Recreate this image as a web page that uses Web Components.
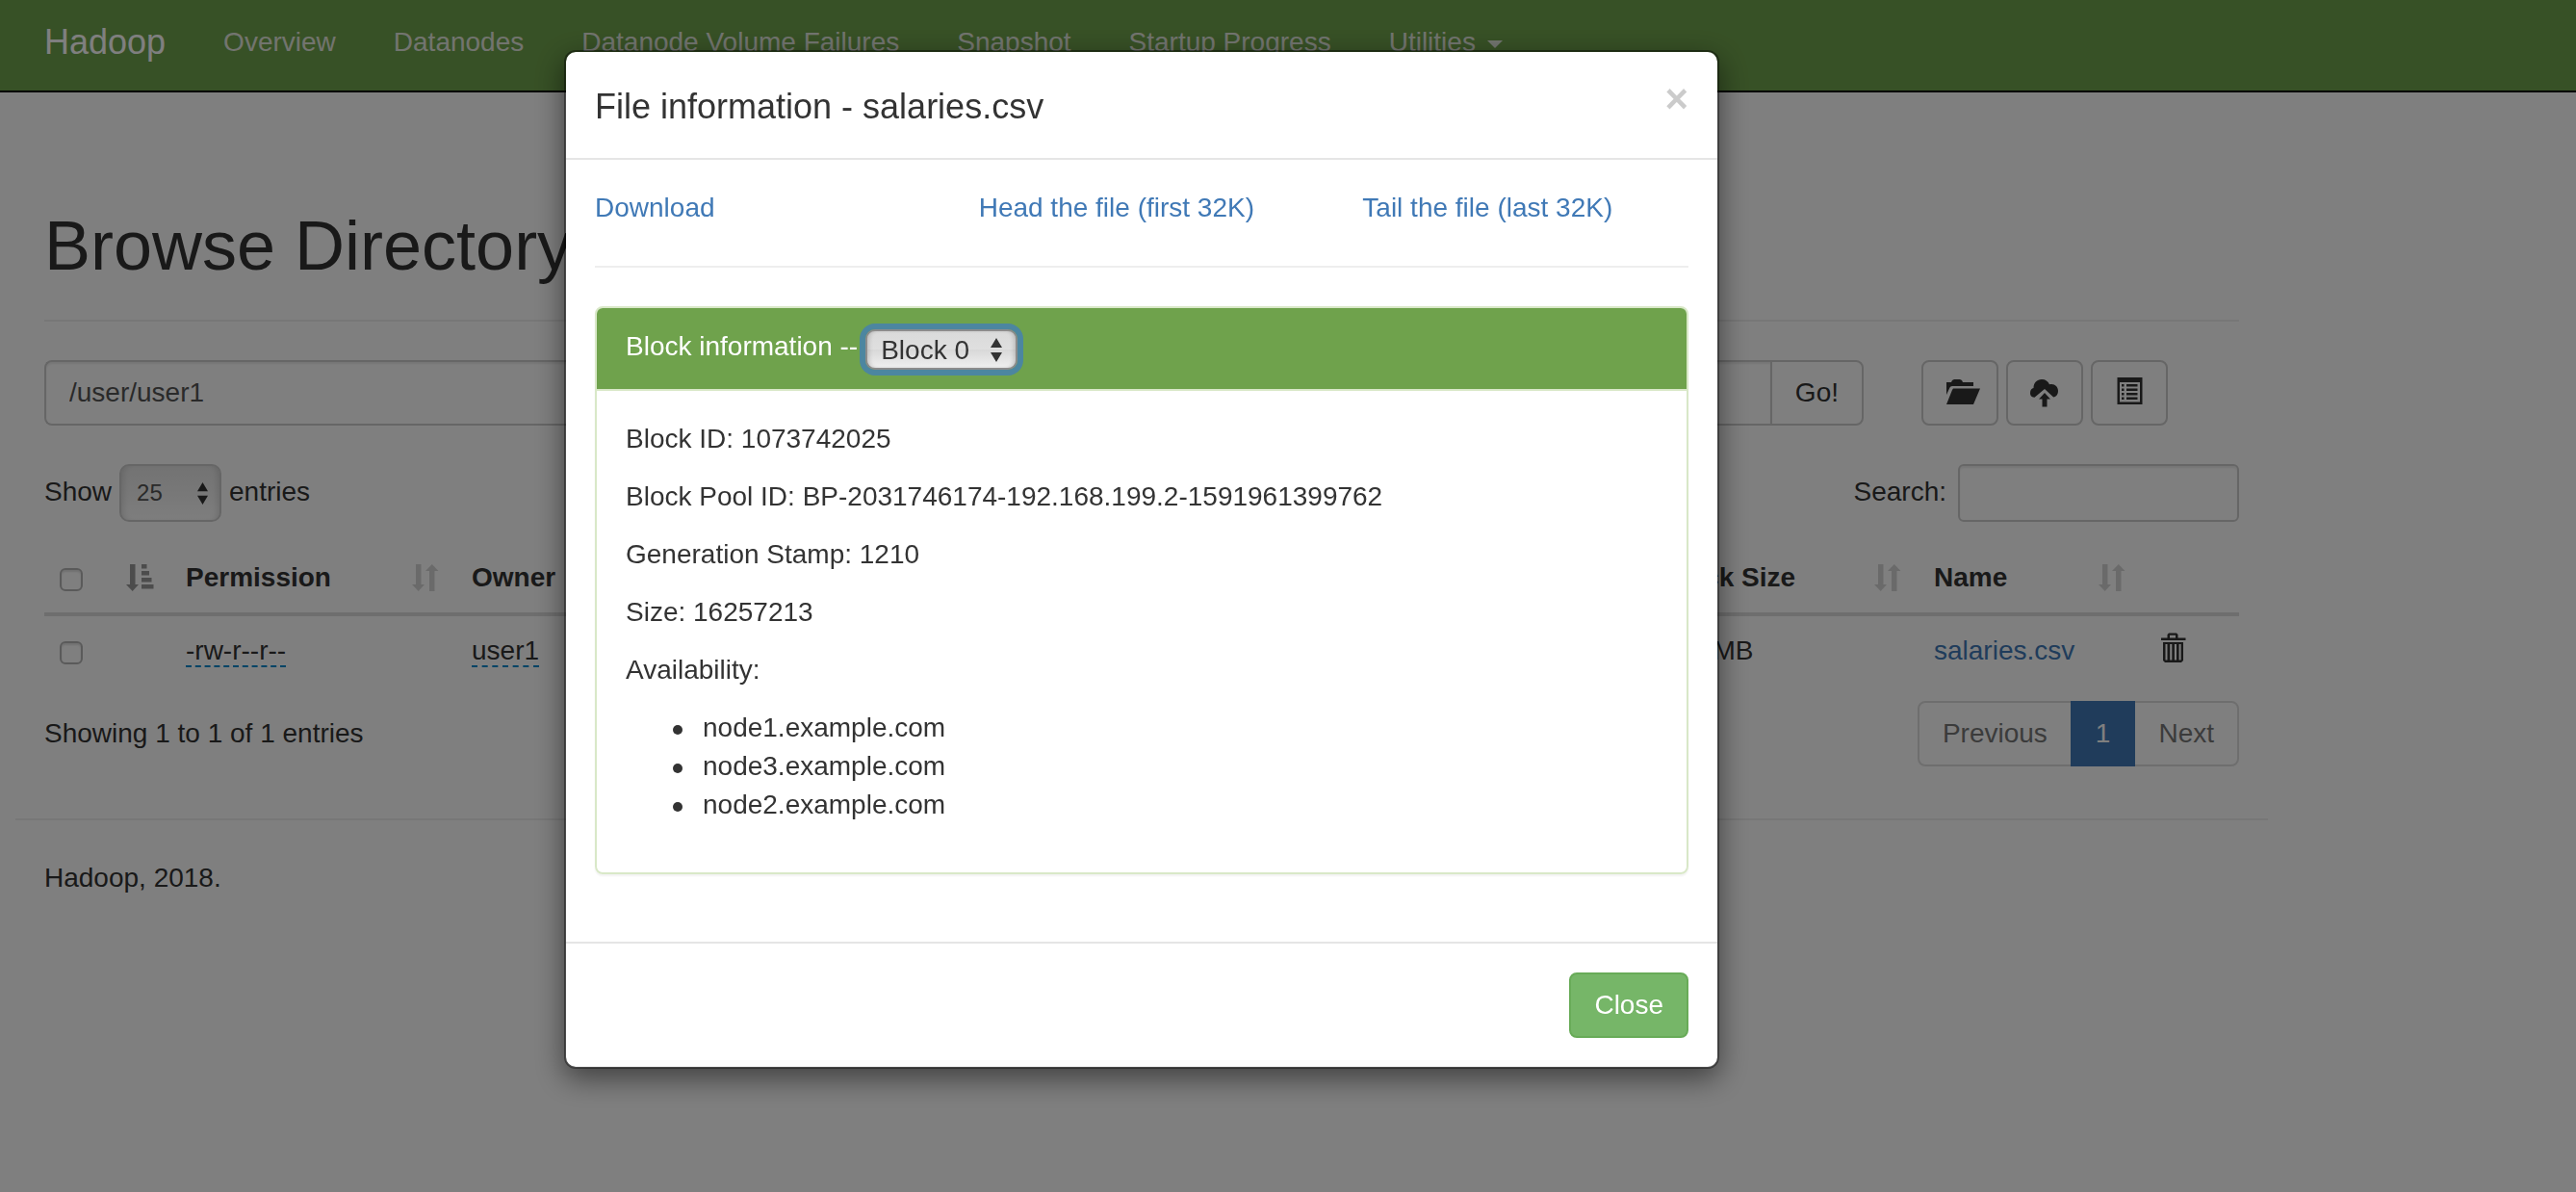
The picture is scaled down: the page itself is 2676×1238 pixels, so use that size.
<!DOCTYPE html>
<html lang="en">
<head>
<meta charset="utf-8">
<title>Browsing HDFS</title>
<style>
  :root {
    --green: #6fa24c;
    --link: #4079b6;
    --text: #333;
    --line: #eee;
    --gutter: 30px;
    --aside: 304px;
  }
  body {
    margin: 0;
    background: #fff;
    color: var(--text);
    font: 28px/40px "Liberation Sans", Arial, sans-serif;
  }
</style>
</head>
<body>
<hdfs-navbar></hdfs-navbar>
<hdfs-container>
  <hdfs-explorer></hdfs-explorer>
  <hdfs-footer slot="footer">Hadoop, 2018.</hdfs-footer>
</hdfs-container>
<hdfs-modal heading="File information - salaries.csv">
  <file-links></file-links>
  <block-panel></block-panel>
</hdfs-modal>

<script>
const define = (name, html, setup) => {
  const template = document.createElement('template');
  template.innerHTML = html;
  customElements.define(name, class extends HTMLElement {
    constructor() {
      super();
      this.attachShadow({ mode: 'open' }).append(template.content.cloneNode(true));
    }
    connectedCallback() { if (setup) setup(this, this.shadowRoot); }
  });
};

// Pair of triangles shown at the right end of a drop-down.
const arrows = `url("data:image/svg+xml,%3Csvg xmlns='http://www.w3.org/2000/svg' width='12' height='25' viewBox='0 0 12 25'%3E%3Cpath fill='%23333' d='M6 0l6 10H0zM0 15h12L6 25z'/%3E%3C/svg%3E")`;

const ICONS = {
  folder: '<path d="M0 16V3h5l1-2 2-1h6l2 1 1 2h11v4H6Q4 7 3.500 8.500zM7 9.500h28L28 26H0L6 11z"/>',
  cloud: '<path d="M3.500 18.800C0 18.500-1 16.500-1 14c0-3 1.500-4.500 3.500-5C2.500 3.500 6 0 11 0c4 0 6.500 2 8 5.200 5-1.200 9 2 9 6.800 0 3.500-2 6-4.800 6.500L14 10z"/><path d="M14 14l6 6.500h-3.500v8h-5v-8H8z"/>',
  list: '<path fill-rule="evenodd" d="M1.500-2h26v28h-26zM4 3v20.500h21V3z"/><path d="M6 5h2.500v2.500H6zm5 0h11.500v2.500H11zM6 9.500h2.500V12H6zm5 0h11.500V12H11zM6 14h2.500v2.500H6zm5 0h11.500v2.500H11zM6 18.500h2.500V21H6zm5 0h11.500V21H11z"/>',
  trash: '<path fill-rule="evenodd" d="M9.500 5.500V2L11 .5h8L20.500 2v3.500H28.500V8H3V5.500zM12 5.500h6V2.800h-6zM5 10h21v19l-2 2H7l-2-2zM7.500 12v16.500h2V12zm4.700 0v16.500h2.100V12zm4.700 0v16.500h2.100V12zm4.700 0v16.500h2V12z"/>',
  both: '<path d="M4 0h5.500v21H13l-6.300 7L0 21h4zM18 28h5.500V7H27.500L20.800 0 14 7h4z"/>',
  asc: '<path d="M4 0h5.500v21H13l-6.300 7L0 21h4zM16 0h5.500v4.500H16zM16 7h8v4.500h-8zM16 14h10.500v4.500H16zM16 21h12.500v4.500H16z"/>'
};
define('ui-icon', `
  <style>
    :host { display: block; flex: none; width: 28px; height: 28px; }
    svg { display: block; width: 28px; height: 28px; overflow: visible; fill: currentColor; }
  </style>
  <svg viewBox="0 0 28 28" aria-hidden="true"></svg>`,
  (el, root) => { root.querySelector('svg').innerHTML = ICONS[el.getAttribute('name')]; });

define('hdfs-navbar', `
  <style>
    :host { display: block; background: var(--green); border-bottom: 2px solid #080808; }
    nav { display: flex; padding-left: 16px; }
    a { padding: 24px 30px 30px; color: #e4e9df; text-decoration: none; }
    .brand { font-size: 36px; color: #fff; }
    .caret { display: inline-block; margin-left: 4px; vertical-align: middle;
      border: 8px solid transparent; border-top-color: currentColor; border-bottom: 0; }
  </style>
  <nav>
    <a class="brand" href="#">Hadoop</a>
    <a href="#overview">Overview</a>
    <a href="#datanodes">Datanodes</a>
    <a href="#failures">Datanode Volume Failures</a>
    <a href="#snapshot">Snapshot</a>
    <a href="#startup">Startup Progress</a>
    <a href="#utilities">Utilities <span class="caret"></span></a>
  </nav>`);

define('hdfs-container', `
  <style>
    :host { display: block; margin-right: var(--aside); }
    div { max-width: 2340px; margin: 0 auto; }
    main { padding: 0 var(--gutter); }
  </style>
  <div><main><slot></slot></main><slot name="footer"></slot></div>`);

define('hdfs-footer', `
  <style>
    :host { display: block; margin-top: 54px; border-top: 2px solid var(--line); padding: 40px var(--gutter) 0; }
  </style>
  <slot></slot>`);

define('hdfs-explorer', `
  <style>
    :host { display: block; padding-top: 120px; }
    * { box-sizing: border-box; }
    header { border-bottom: 2px solid var(--line); padding-bottom: 38px; margin-bottom: 40px; }
    h1 { margin: 0; font-size: 72px; line-height: 78px; font-weight: normal; }
    input, select, button { font: inherit; color: #555; }
    input[type=text], input[type=search] {
      border: 2px solid #ccc; border-radius: 8px; background: #fff; padding: 0 24px;
      box-shadow: inset 0 2px 2px rgba(0,0,0,.075); min-width: 0;
    }
    button { height: 68px; padding: 0 24px; border: 2px solid #ccc; border-radius: 8px; background: #fff; color: #333; }
    .tools { display: grid; grid-template-columns: 5fr 1fr; margin: 0 calc(-1 * var(--gutter)) 40px; }
    .tools > div { padding: 0 var(--gutter); }
    .path { display: flex; }
    .path input { flex: 1; height: 68px; border-radius: 8px 0 0 8px; border-right: 0; }
    .path button { border-radius: 0 8px 8px 0; }
    .actions { display: flex; gap: 8px; }
    .controls { display: flex; justify-content: space-between; margin-bottom: 22px; }
    .controls label { display: flex; align-items: baseline; }
    .length { gap: 8px; }
    .length select {
      appearance: none; width: 106px; height: 60px; padding: 0 16px; font-size: 24px;
      border: 2px solid #ccc; border-radius: 10px;
      background: ${arrows} no-repeat right 12px center / 11px 23px, linear-gradient(#e6e6e6, #f0f0f0 50%, #fcfcfc);
      box-shadow: inset 6px 0 6px -4px rgba(0,0,0,.12), inset -6px 0 6px -4px rgba(0,0,0,.12);
    }
    .search { gap: 12px; }
    .search input { width: 292px; height: 60px; border-radius: 6px; font-size: 24px; }
    table { width: 100%; table-layout: fixed; border-collapse: separate; border-spacing: 0; }
    th, td { padding: 16px; text-align: left; vertical-align: top; white-space: nowrap; }
    th { border-bottom: 4px solid #ddd; padding-right: 18px; }
    th div { display: flex; justify-content: space-between; align-items: center; height: 40px; }
    td { height: 72px; }
    ui-icon[name=both] { opacity: .2; }
    ui-icon[name=asc] { opacity: .5; }
    th ui-icon { margin-left: auto; }
    input[type=checkbox] {
      appearance: none; display: block; width: 24px; height: 24px; margin: 10px 0 6px;
      border: 2px solid #b4b4b4; border-radius: 6px; background: #fff;
      box-shadow: inset 0 2px 2px rgba(0,0,0,.12);
    }
    a { color: var(--link); text-decoration: none; }
    .edit { color: inherit; border-bottom: 2px dashed #08c; }
    .trash { display: block; height: 30px; padding: 0; border: 0; background: none; }
    .after { display: flex; justify-content: space-between; align-items: center; padding-top: 16px; }
    .pages { display: flex; }
    .pages a { display: block; padding: 12px 24px; border: 2px solid #ddd; margin-left: -2px; color: #777; }
    .pages a:first-child { margin-left: 0; border-radius: 8px 0 0 8px; }
    .pages a:last-child { border-radius: 0 8px 8px 0; }
    .pages .on { background: var(--link); border-color: var(--link); color: #fff; position: relative; z-index: 1; }
  </style>
  <header><h1>Browse Directory</h1></header>
  <div class="tools">
    <div class="path"><input type="text" aria-label="Directory" value="/user/user1"><button>Go!</button></div>
    <div class="actions">
      <button aria-label="Create directory"><ui-icon name="folder"></ui-icon></button>
      <button aria-label="Upload files"><ui-icon name="cloud"></ui-icon></button>
      <button aria-label="Cut and paste"><ui-icon name="list"></ui-icon></button>
    </div>
  </div>
  <div class="controls">
    <label class="length">Show <select><option>25</option></select> entries</label>
    <label class="search">Search: <input type="search"></label>
  </div>
  <table>
    <colgroup>
      <col style="width:56px"><col style="width:75px"><col style="width:297px">
      <col style="width:220px"><col style="width:220px"><col style="width:200px"><col>
      <col style="width:280px"><col style="width:284px"><col style="width:233px"><col style="width:100px">
    </colgroup>
    <thead><tr>
      <th><input type="checkbox" aria-label="Select all"></th>
      <th><div><ui-icon name="asc"></ui-icon></div></th>
      <th><div>Permission<ui-icon name="both"></ui-icon></div></th>
      <th><div>Owner<ui-icon name="both"></ui-icon></div></th>
      <th aria-label="Group"><div><ui-icon name="both"></ui-icon></div></th>
      <th aria-label="Size"><div><ui-icon name="both"></ui-icon></div></th>
      <th aria-label="Last Modified"><div><ui-icon name="both"></ui-icon></div></th>
      <th aria-label="Replication"><div><ui-icon name="both"></ui-icon></div></th>
      <th><div>Block Size<ui-icon name="both"></ui-icon></div></th>
      <th><div>Name<ui-icon name="both"></ui-icon></div></th>
      <th></th>
    </tr></thead>
    <tbody><tr>
      <td><input type="checkbox" aria-label="Select salaries.csv"></td>
      <td></td>
      <td><span class="edit">-rw-r--r--</span></td>
      <td><span class="edit">user1</span></td>
      <td></td>
      <td></td>
      <td></td>
      <td></td>
      <td>128 MB</td>
      <td><a href="#file">salaries.csv</a></td>
      <td><button class="trash" aria-label="Delete"><ui-icon name="trash"></ui-icon></button></td>
    </tr></tbody>
  </table>
  <div class="after">
    <div>Showing 1 to 1 of 1 entries</div>
    <nav class="pages"><a href="#prev">Previous</a><a class="on" href="#1">1</a><a href="#next">Next</a></nav>
  </div>`);

define('hdfs-modal', `
  <style>
    :host { display: block; position: fixed; inset: 0; z-index: 10; background: rgba(0,0,0,.5);
      padding: 52px var(--aside) 0 0; }
    * { box-sizing: border-box; }
    .dialog { max-width: 1200px; margin: 0 auto; background: #fff; background-clip: padding-box;
      border: 2px solid rgba(0,0,0,.4); border-radius: 12px;
      box-shadow: 0 10px 30px rgba(0,0,0,.5); }
    header { display: flex; justify-content: space-between; align-items: flex-start;
      padding: 32px 30px 28px; border-bottom: 2px solid #e5e5e5; }
    h4 { margin: 0; font-size: 36px; line-height: 50px; font-weight: normal; }
    .x { border: 0; background: none; padding: 0; font: bold 42px/42px "Liberation Sans", Arial, sans-serif;
      color: #000; opacity: .2; margin-top: -4px; }
    .body { padding: 30px; }
    footer { display: flex; justify-content: flex-end; padding: 30px; border-top: 2px solid #e5e5e5; }
    .close { height: 68px; padding: 0 24px; font: inherit; color: #fff; background: #76b668;
      border: 2px solid #68ab58; border-radius: 8px; }
  </style>
  <div class="dialog" role="dialog" aria-labelledby="title">
    <header><h4 id="title"></h4><button class="x" aria-label="Dismiss">×</button></header>
    <div class="body"><slot></slot></div>
    <footer><button class="close">Close</button></footer>
  </div>`,
  (el, root) => { root.querySelector('h4').textContent = el.getAttribute('heading'); });

define('file-links', `
  <style>
    :host { display: block; }
    nav { display: grid; grid-template-columns: repeat(3, 1fr); margin: 0 -30px; }
    a { color: var(--link); text-decoration: none; padding: 0 30px; }
    hr { margin: 40px 0; border: 0; border-top: 2px solid var(--line); }
  </style>
  <nav>
    <a href="#download">Download</a>
    <a href="#head">Head the file (first 32K)</a>
    <a href="#tail">Tail the file (last 32K)</a>
  </nav>
  <hr>`);

define('block-panel', `
  <style>
    :host { display: block; margin-bottom: 40px; border: 2px solid #d9e8c8; border-radius: 8px;
      box-shadow: 0 2px 2px rgba(0,0,0,.05); }
    * { box-sizing: border-box; }
    .head { display: flex; gap: 8px; padding: 20px 30px; background: var(--green); color: #fff;
      border-bottom: 2px solid #d9e8c8; border-radius: 6px 6px 0 0; }
    .head label { height: 44px; }
    select { appearance: none; align-self: flex-end; width: 158px; height: 42px; padding: 0 14px 2px; font: inherit; color: #333;
      border: 2px solid #8c8c8c; border-radius: 10px;
      background: ${arrows} no-repeat right 14px center, linear-gradient(#dadada, #dfdfdf 50%, #d8d8d8 51%, #f0f0f0);
      box-shadow: 0 0 0 6px #4c86a0, inset 4px 0 4px -2px rgba(0,0,0,.15), inset -4px 0 4px -2px rgba(0,0,0,.15); }
    .content { padding: 30px; }
    p { margin: 0 0 20px; }
    ul { margin: 0 0 20px; padding-left: 49px; list-style: none; }
    li { display: flex; align-items: center; gap: 21px; }
    li::before { content: ""; width: 10px; height: 10px; margin-top: 4px; border-radius: 50%; background: currentColor; }
  </style>
  <div class="head">
    <label for="block">Block information --</label>
    <select id="block"><option>Block 0</option></select>
  </div>
  <div class="content">
    <p>Block ID: 1073742025</p>
    <p>Block Pool ID: BP-2031746174-192.168.199.2-1591961399762</p>
    <p>Generation Stamp: 1210</p>
    <p>Size: 16257213</p>
    <p>Availability:</p>
    <ul>
      <li>node1.example.com</li>
      <li>node3.example.com</li>
      <li>node2.example.com</li>
    </ul>
  </div>`);
</script>
</body>
</html>
